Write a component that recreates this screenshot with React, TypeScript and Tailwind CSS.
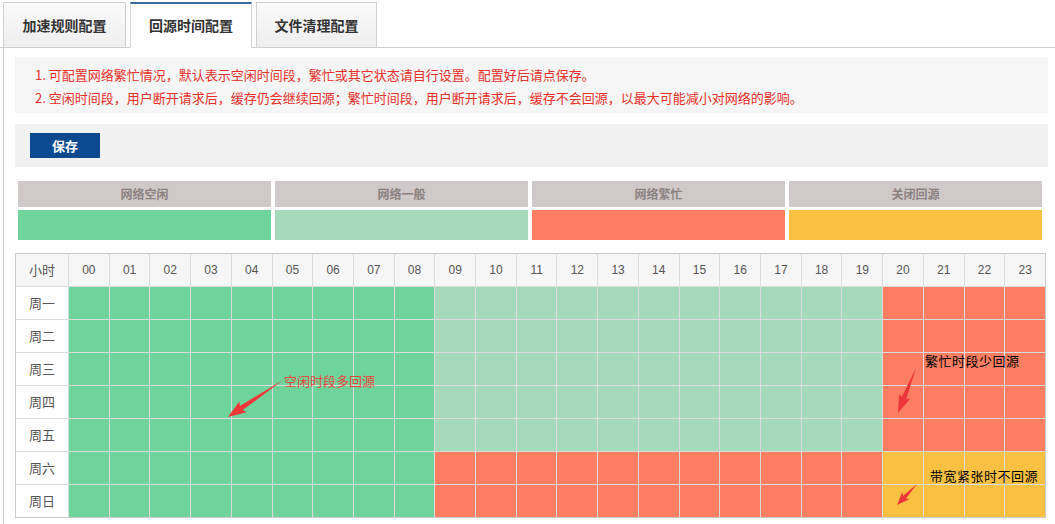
import React from 'react';

const HOURS = Array.from({length: 24}, (_, i) => String(i).padStart(2, '0'));
const DAYS = ['周一', '周二', '周三', '周四', '周五', '周六', '周日'];

const GREEN = 'bg-[#6fd49b]';
const LIGHT = 'bg-[#a4d9ba]';
const BUSY = 'bg-[#fd7e63]';
const OFF = 'bg-[#fac041]';

function cellClass(day: number, hour: number) {
  if (hour <= 8) return GREEN;
  if (day < 5) return hour <= 19 ? LIGHT : BUSY;
  return hour <= 19 ? BUSY : OFF;
}

// tapered arrow polygon from tail to tip
function arrowPoints(tx: number, ty: number, hx: number, hy: number, headLen: number, headW: number, shaftW: number) {
  const dx = hx - tx;
  const dy = hy - ty;
  const len = Math.hypot(dx, dy);
  const ux = dx / len;
  const uy = dy / len;
  const nx = -uy;
  const ny = ux;
  const bx = hx - ux * headLen;
  const by = hy - uy * headLen;
  const p = (x: number, y: number) => `${x.toFixed(1)},${y.toFixed(1)}`;
  return [
    p(tx, ty),
    p(bx + nx * shaftW / 2, by + ny * shaftW / 2),
    p(bx + nx * headW / 2 - ux * 2, by + ny * headW / 2 - uy * 2),
    p(hx, hy),
    p(bx - nx * headW / 2 - ux * 2, by - ny * headW / 2 - uy * 2),
    p(bx - nx * shaftW / 2, by - ny * shaftW / 2),
  ].join(' ');
}

const tabs = [
  {label: '加速规则配置', w: 'w-[123px]', active: false},
  {label: '回源时间配置', w: 'w-[122px]', active: true},
  {label: '文件清理配置', w: 'w-[121px]', active: false},
];

export default function App() {
  return (
    <div className="relative w-[1055px] h-[524px] overflow-hidden bg-white font-['Noto_Sans_CJK_SC','Microsoft_YaHei',sans-serif]">
      {/* Tabs */}
      <div className="flex items-end gap-[4px] pl-[3px] pt-[2px] border-b border-[#cfcfcf] h-[48px]">
        {tabs.map((t) => (
          <div
            key={t.label}
            className={
              t.active
                ? `${t.w} h-[46px] -mb-px bg-white border border-[#d4d4d4] border-b-white border-t-2 border-t-[#3b6a9a] flex items-center justify-center text-[14px] font-bold text-[#333]`
                : `${t.w} h-[45px] bg-gradient-to-b from-[#fafafa] to-[#eeeeee] border border-[#d0d0d0] border-b-0 flex items-center justify-center text-[14px] font-bold text-[#333]`
            }
          >
            {t.label}
          </div>
        ))}
      </div>

      {/* Panel */}
      <div className="ml-[3px] border-l border-[#d0d0d0] pl-[11px] pr-[7px] pt-[9px] h-[476px]">
        {/* Notes */}
        <div className="bg-[#f5f5f5] h-[56px] pl-[20px] pt-[6px] text-[13px] leading-[23px] text-[#e8302a]">
          <p>1. 可配置网络繁忙情况，默认表示空闲时间段，繁忙或其它状态请自行设置。配置好后请点保存。</p>
          <p>2. 空闲时间段，用户断开请求后，缓存仍会继续回源；繁忙时间段，用户断开请求后，缓存不会回源，以最大可能减小对网络的影响。</p>
        </div>

        {/* Save bar */}
        <div className="mt-[11px] bg-[#f1f1f1] h-[43px] flex items-center pl-[15px]">
          <button className="w-[70px] h-[25px] bg-[#0b4a8f] text-white text-[13px] font-bold">保存</button>
        </div>

        {/* Legend */}
        <div className="mt-[14px] ml-[3px] mr-[6px] grid grid-cols-4 gap-x-[4px] gap-y-[3px]">
          {['网络空闲', '网络一般', '网络繁忙', '关闭回源'].map((l) => (
            <div key={l} className="h-[26px] bg-[#d0c9c9] flex items-center justify-center text-[12px] font-bold text-[#8c8282]">
              {l}
            </div>
          ))}
          {[GREEN, LIGHT, BUSY, OFF].map((c, i) => (
            <div key={i} className={`h-[30px] ${c}`} />
          ))}
        </div>

        {/* Schedule table */}
        <div className="mt-[13px] w-[1031px] border border-[#cccccc] bg-[#dcdcdc] grid grid-cols-[52px_repeat(24,minmax(0,1fr))] gap-px text-[#555]">
          <div className="h-[32px] bg-[#f6f6f6] flex items-center justify-center text-[13px]">小时</div>
          {HOURS.map((h) => (
            <div key={h} className="h-[32px] bg-[#f6f6f6] flex items-center justify-center text-[12px] font-['Liberation_Sans',sans-serif]">
              {h}
            </div>
          ))}
          {DAYS.map((d, di) => (
            <React.Fragment key={d}>
              <div className="h-[32px] bg-white flex items-center justify-center text-[13px]">{d}</div>
              {HOURS.map((_, hi) => (
                <div key={hi} className={`h-[32px] ${cellClass(di, hi)}`} />
              ))}
            </React.Fragment>
          ))}
        </div>
      </div>

      {/* Annotations */}
      <div className="absolute left-[284px] top-[371px] text-[13px] text-[#e5473d]">空闲时段多回源</div>
      <div className="absolute left-[925px] top-[351px] text-[13px] text-black tracking-[0.5px]">繁忙时段少回源</div>
      <div className="absolute left-[930px] top-[466px] text-[13px] text-black tracking-[0.5px]">带宽紧张时不回源</div>
      <svg className="absolute inset-0 pointer-events-none" width={1055} height={524}>
        <polygon points={arrowPoints(283, 380, 228, 417, 16, 13, 5)} fill="#f0353a" />
        <polygon points={arrowPoints(916, 368, 898, 413, 16, 12, 5)} fill="#f0353a" />
        <polygon points={arrowPoints(917, 484, 897, 505, 11, 10, 4)} fill="#f0353a" />
      </svg>
    </div>
  );
}
